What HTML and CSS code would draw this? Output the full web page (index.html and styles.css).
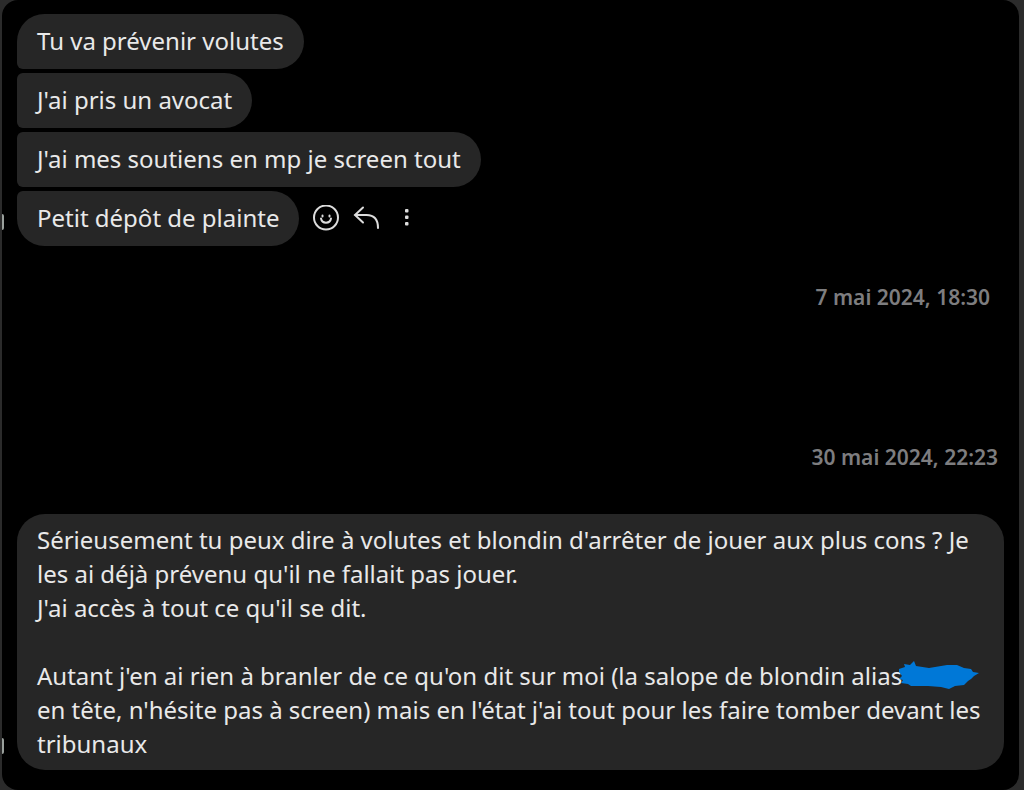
FILE: index.html
```
<!DOCTYPE html>
<html lang="fr">
<head>
    <meta charset="UTF-8">
    <meta name="viewport" content="width=device-width, initial-scale=1.0">
    <title>Messages</title>
    <link rel="stylesheet" href="styles.css">
</head>
<body>
    <main class="chat">
        <div class="group">
            <p class="bubble first">Tu va prévenir volutes</p>
            <p class="bubble middle">J'ai pris un avocat</p>
            <p class="bubble middle">J'ai mes soutiens en mp je screen tout</p>
            <div class="row">
                <span class="avatar"></span>
                <p class="bubble last">Petit dépôt de plainte</p>
                <div class="actions">
                    <button type="button" aria-label="Réagir">
                        <svg width="28" height="28" viewBox="0 0 28 28">
                            <circle cx="13" cy="12.500" r="12" />
                            <path d="M8 13.500c1 5.500 9 5.500 10 0" />
                            <path d="M9.500 10.500v1M16.500 10.500v1" />
                        </svg>
                    </button>
                    <button type="button" aria-label="Répondre">
                        <svg width="28" height="28" viewBox="0 0 28 28">
                            <path d="M10 2.500L2 10l8 7.500" />
                            <path d="M2.500 10h11c7.500 0 11.500 4.500 11.500 13" />
                        </svg>
                    </button>
                    <button type="button" aria-label="Plus">
                        <svg class="dots" width="28" height="28" viewBox="0 0 28 28">
                            <rect x="12" y="4" width="3.500" height="3.500" rx="1" />
                            <rect x="12" y="10.500" width="3.500" height="3.500" rx="1" />
                            <rect x="12" y="17" width="3.500" height="3.500" rx="1" />
                        </svg>
                    </button>
                </div>
            </div>
        </div>

        <time class="stamp" datetime="2024-05-07T18:30">7 mai 2024, 18:30</time>
        <time class="stamp later" datetime="2024-05-30T22:23">30 mai 2024, 22:23</time>

        <div class="row long">
            <span class="avatar"></span>
            <div class="bubble">
                <p>Sérieusement tu peux dire à volutes et blondin d'arrêter de jouer aux plus cons ? Je les ai déjà prévenu qu'il ne fallait pas jouer.</p>
                <p>J'ai accès à tout ce qu'il se dit.</p>
                <p class="spaced">Autant j'en ai rien à branler de ce qu'on dit sur moi (la salope de blondin alias<svg class="scribble" width="82" height="30" viewBox="0 0 82 30"><path d="M1 8l6-2-1-3 6 1 4-4 2 5 13 2 18-3h10l7 3 7 1 2 3 6 1-5 3-3 3-3 2-4 4-9 1-6 3-8-2-13-1H13l-3-2-7-1 2-3-4-1 3-3-3-4z" /></svg> en tête, n'hésite pas à screen) mais en l'état j'ai tout pour les faire tomber devant les tribunaux</p>
            </div>
        </div>
    </main>
</body>
</html>
```
FILE: styles.css
```
* {
    box-sizing: border-box;
}
body {
    margin: 0;
    background-color: #2b2b2b;
    color: #e9e9e9;
    font-family: "Segoe UI", "Noto Sans", sans-serif;
    font-size: 24px;
    line-height: 34px;
}
p {
    margin: 0;
}
.chat {
    display: flex;
    flex-direction: column;
    min-height: 100vh;
    margin: 0 5px 0 2px;
    padding: 14px 15px 20px;
    background-color: #000;
    border-radius: 16px;
}
.group {
    display: flex;
    flex-direction: column;
    align-items: flex-start;
    gap: 4px;
}
.row {
    position: relative;
    display: flex;
    align-items: center;
    gap: 14px;
}
.bubble {
    padding: 10px 20px 11px;
    background-color: #262626;
    border-radius: 28px;
}
.first {
    border-bottom-left-radius: 6px;
}
.middle {
    border-top-left-radius: 6px;
    border-bottom-left-radius: 6px;
}
.last {
    border-top-left-radius: 6px;
}
.actions {
    display: flex;
    gap: 12px;
}
.actions button {
    display: flex;
    padding: 0;
    border: 0;
    background: none;
}
.actions svg {
    fill: none;
    stroke: #dcdcdc;
    stroke-width: 2;
    stroke-linecap: round;
}
.actions .dots {
    fill: #dcdcdc;
    stroke: none;
}
/* bord de la photo de profil, coupée par le panneau */
.avatar {
    position: absolute;
    left: -15px;
    bottom: 16px;
    width: 2px;
    height: 16px;
    background-color: #9aa09c;
    border-radius: 0 2px 2px 0;
}
.stamp {
    align-self: flex-end;
    margin: 34px 14px 0 0;
    color: #7d7d7f;
    font-size: 21px;
    font-weight: 600;
}
.later {
    margin: 126px 6px 40px 0;
}
.long .bubble {
    flex: 1;
    padding: 9px 20px;
}
.spaced {
    margin-top: 34px;
}
.scribble {
    height: 30px;
    margin: -4px -6px 0 -4px;
    vertical-align: -6px;
    fill: #0078d7;
}
```
